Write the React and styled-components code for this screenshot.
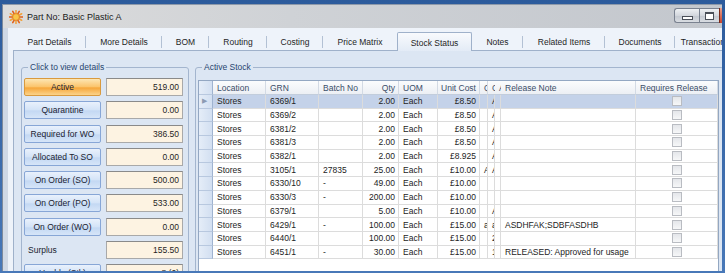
import React from "react";
import styled, { createGlobalStyle } from "styled-components";

const GlobalStyle = createGlobalStyle`
  html, body { margin: 0; padding: 0; }
  body {
    width: 725px;
    height: 273px;
    overflow: hidden;
    background: #3f6eae;
    font-family: "Liberation Sans", Arial, sans-serif;
  }
`;

// outer blue border round the screenshot
const Screen = styled.div`
  width: 725px;
  height: 273px;
  box-sizing: border-box;
  padding: 4px 3px 3px 2px;
  background: linear-gradient(#2c5b9c, #4878b8);
`;

const Window = styled.div`
  height: 100%;
  display: flex;
  flex-direction: column;
  background: #cfd8e5;
  border-top: 1px solid #8d99aa;
  border-left: 1px solid #7d8a9c;
  overflow: hidden;
`;

const TitleBar = styled.div`
  height: 23px;
  flex: none;
  display: flex;
  align-items: center;
  padding-left: 6px;
  background: linear-gradient(to right, #dcdcdc 0%, #cfd2d6 40%, #c3c7cd 100%);
`;

const TitleText = styled.span`
  margin-left: 4px;
  font-size: 9px;
  color: #1b1b1b;
  flex: 1;
`;

const Controls = styled.div`
  align-self: flex-start;
  margin-top: 3px;
  display: flex;
  height: 15px;
`;

const CtrlButton = styled.div`
  width: ${(p) => p.$w}px;
  height: 100%;
  box-sizing: border-box;
  display: flex;
  align-items: center;
  justify-content: center;
  border: 1px solid #7a8290;
  border-right: none;
  background: linear-gradient(#eef0f3, #d3d7dd 50%, #c2c7cf 51%, #d9dde2);
  &:first-child { border-radius: 3px 0 0 3px; }
`;

const CloseStub = styled.div`
  width: 2px;
  height: 100%;
  background: linear-gradient(#e8a08c, #c8412a);
  border-left: 1px solid #7a2a1a;
`;

const MinGlyph = styled.div`
  width: 9px;
  height: 2px;
  margin-top: 5px;
  background: #fff;
  border: 1px solid #4a4f58;
`;

const RestoreGlyph = styled.div`
  width: 7px;
  height: 5px;
  background: #fff;
  border: 1px solid #4a4f58;
  border-top-width: 2px;
`;

const Client = styled.div`
  flex: 1;
  margin-left: 5px;
  display: flex;
  flex-direction: column;
  background: #eef3fa;
  min-height: 0;
`;

const TabStrip = styled.div`
  height: 22px;
  flex: none;
  display: flex;
  align-items: flex-end;
  padding-left: 5px;
  position: relative;
  z-index: 1;
`;

const Tab = styled.div`
  width: ${(p) => p.$w}px;
  flex: none;
  box-sizing: border-box;
  height: ${(p) => (p.$active ? 19 : 17)}px;
  display: flex;
  align-items: center;
  justify-content: center;
  font-size: 8.5px;
  color: #1f1f1f;
  white-space: nowrap;
  overflow: hidden;
  position: relative;
  margin-bottom: ${(p) => (p.$active ? -1 : 0)}px;
  padding-top: ${(p) => (p.$active ? 1 : 0)}px;
  background: ${(p) => (p.$active ? "linear-gradient(#f8fafd, #e3ebf6)" : "transparent")};
  border: ${(p) => (p.$active ? "1px solid #9fb1ca" : "none")};
  border-bottom: none;
  border-radius: 2px 2px 0 0;
  &::after {
    content: "";
    display: ${(p) => (p.$sep ? "block" : "none")};
    position: absolute;
    right: 0;
    top: 3px;
    bottom: 2px;
    width: 1px;
    background: #b3c1d4;
  }
`;

const Page = styled.div`
  flex: 1;
  min-height: 0;
  margin-left: 5px;
  display: flex;
  gap: 6px;
  align-items: flex-start;
  padding: 11px 0 0 7px;
  background: #dce6f3;
  border-top: 1px solid #9fb1ca;
  border-left: 1px solid #9fb1ca;
  overflow: hidden;
`;

const Group = styled.fieldset`
  margin: 0;
  flex: none;
  width: ${(p) => p.$w}px;
  height: 260px;
  box-sizing: border-box;
  border: 1px solid #a3b5ce;
  border-radius: 3px;
  padding: ${(p) => p.$pt}px 4px 0 2px;
`;

const Legend = styled.legend`
  font-size: 8.5px;
  color: #27456f;
  padding: 0 2px;
  margin-left: 4px;
  line-height: 10px;
`;

const StatusList = styled.div`
  display: grid;
  grid-template-columns: 77px 77px;
  column-gap: 5px;
  row-gap: 5.3px;
  grid-auto-rows: 18px;
`;

const StatusButton = styled.div`
  box-sizing: border-box;
  display: flex;
  align-items: center;
  justify-content: center;
  font-size: 8.5px;
  color: #1a2230;
  border-radius: 2px;
  white-space: nowrap;
  border: 1px solid ${(p) => (p.$active ? "#d99a3e" : "#87a6d6")};
  background: ${(p) =>
    p.$active
      ? "linear-gradient(#fde6b3, #fbc36a 50%, #f6a63a 55%, #fbd38a)"
      : "linear-gradient(#e9f1fc, #d3e3f7 50%, #c3d8f3 55%, #d6e5f8)"};
`;

const StatusLabel = styled.div`
  display: flex;
  align-items: center;
  padding-left: 4px;
  font-size: 8.5px;
  color: #1a2230;
`;

const ValueBox = styled.div`
  box-sizing: border-box;
  display: flex;
  align-items: center;
  justify-content: flex-end;
  padding-right: 3px;
  font-size: 8.5px;
  color: #1f1f1f;
  background: #fdf3e2;
  border: 1px solid #a9a9a9;
  border-top-color: #8a8a8a;
`;

const COLS = "14px 53px 53px 44px 36px 39px 42px 8px 7px 6px 135px 82px";

const Grid = styled.div`
  width: 521px;
  height: 200px;
  box-sizing: border-box;
  border: 1px solid #93a7c2;
  background: #fff;
`;

const Row = styled.div`
  display: grid;
  grid-template-columns: ${COLS};
  height: ${(p) => (p.$head ? 14 : 13.7)}px;
`;

const HeadCell = styled.div`
  box-sizing: border-box;
  display: flex;
  align-items: center;
  justify-content: ${(p) => (p.$right ? "flex-end" : "flex-start")};
  padding: 0 3px 0 4px;
  font-size: 8.5px;
  color: #3a4d68;
  white-space: nowrap;
  overflow: hidden;
  background: linear-gradient(#fbfcfd, #eceff4);
  border-right: 1px solid #d3dae4;
  border-bottom: 1px solid #c2cddc;
`;

const RowHead = styled.div`
  box-sizing: border-box;
  display: flex;
  align-items: center;
  padding-left: 3px;
  font-size: 7px;
  color: #8c9bb3;
  background: linear-gradient(to right, #e5edf8, #d2dff1);
  border-right: 1px solid #9fb3d0;
  border-bottom: 1px solid #b8c8df;
`;

const Cell = styled.div`
  box-sizing: border-box;
  display: flex;
  align-items: center;
  justify-content: ${(p) => (p.$right ? "flex-end" : p.$center ? "center" : "flex-start")};
  padding: ${(p) => (p.$narrow ? "0 0 0 4px" : "0 3px 0 4px")};
  font-size: 8.5px;
  color: #232323;
  white-space: nowrap;
  overflow: hidden;
  background: ${(p) => (p.$sel ? "#c4d2e9" : "#fff")};
  border-right: 1px solid #dcdcdc;
  border-bottom: 1px solid #dcdcdc;
`;

const Check = styled.div`
  width: 8px;
  height: 8px;
  border: 1px solid #b9bcc2;
  background: linear-gradient(#e4e6ea, #f6f7f8);
`;

const SunIcon = () => (
  <svg width="14" height="14" viewBox="0 0 14 14">
    {Array.from({ length: 12 }).map((_, i) => {
      const a = (i * Math.PI) / 6;
      return (
        <line
          key={i}
          x1={7 + Math.cos(a) * 3}
          y1={7 + Math.sin(a) * 3}
          x2={7 + Math.cos(a) * 6.5}
          y2={7 + Math.sin(a) * 6.5}
          stroke={i % 2 ? "#f2a23a" : "#e0601c"}
          strokeWidth="1.6"
          strokeLinecap="round"
        />
      );
    })}
    <circle cx="7" cy="7" r="3.4" fill="#f7c548" stroke="#e07a1e" strokeWidth="0.8" />
  </svg>
);

const tabs = [
  ["Part Details", 73],
  ["More Details", 76],
  ["BOM", 47],
  ["Routing", 58],
  ["Costing", 56],
  ["Price Matrix", 74],
  ["Stock Status", 75, true],
  ["Notes", 51],
  ["Related Items", 82],
  ["Documents", 70],
  ["Transactions", 60],
];

const statuses = [
  ["Active", "519.00", "active"],
  ["Quarantine", "0.00"],
  ["Required for WO", "386.50"],
  ["Allocated To SO", "0.00"],
  ["On Order (SO)", "500.00"],
  ["On Order (PO)", "533.00"],
  ["On Order (WO)", "0.00"],
  ["Surplus", "155.50", "label"],
  ["Usable (Stk)", "8 (0)"],
];

const headers = [
  ["Location"],
  ["GRN"],
  ["Batch No"],
  ["Qty", true],
  ["UOM"],
  ["Unit Cost", true],
  ["Qtn"],
  ["Cert"],
  ["Approval"],
  ["Release Note"],
  ["Requires Release"],
];

const rows = [
  ["6369/1", "", "2.00", "£8.50", "", "A", ""],
  ["6369/2", "", "2.00", "£8.50", "", "A", ""],
  ["6381/2", "", "2.00", "£8.50", "", "A", ""],
  ["6381/3", "", "2.00", "£8.50", "", "A", ""],
  ["6382/1", "", "2.00", "£8.925", "", "A", ""],
  ["3105/1", "27835", "25.00", "£10.00", "A", "A", ""],
  ["6330/10", "-", "49.00", "£10.00", "", "", ""],
  ["6330/3", "-", "200.00", "£10.00", "", "", ""],
  ["6379/1", "", "5.00", "£10.00", "", "A", ""],
  ["6429/1", "-", "100.00", "£15.00", "a", "a", "ASDHFAK;SDBFASDHB"],
  ["6440/1", "", "100.00", "£15.00", "", "2", ""],
  ["6451/1", "-", "30.00", "£15.00", "", "1", "RELEASED: Approved for usage"],
];

function App() {
  return (
    <Screen>
      <GlobalStyle />
      <Window>
        <TitleBar>
          <SunIcon />
          <TitleText>Part No: Basic Plastic A</TitleText>
          <Controls>
            <CtrlButton $w={25}>
              <MinGlyph />
            </CtrlButton>
            <CtrlButton $w={20}>
              <RestoreGlyph />
            </CtrlButton>
            <CloseStub />
          </Controls>
        </TitleBar>
        <Client>
          <TabStrip>
            {tabs.map(([label, w, active], i) => {
              const next = tabs[i + 1];
              const sep = !active && !(next && next[2]) && i < tabs.length - 1;
              return (
                <Tab key={label} $w={w} $active={active} $sep={sep}>
                  {label}
                </Tab>
              );
            })}
          </TabStrip>
          <Page>
            <Group $w={168} $pt={6}>
              <Legend>Click to view details</Legend>
              <StatusList>
                {statuses.map(([label, value, kind]) => (
                  <React.Fragment key={label}>
                    {kind === "label" ? (
                      <StatusLabel>{label}</StatusLabel>
                    ) : (
                      <StatusButton $active={kind === "active"}>{label}</StatusButton>
                    )}
                    <ValueBox>{value}</ValueBox>
                  </React.Fragment>
                ))}
              </StatusList>
            </Group>
            <Group $w={527} $pt={8}>
              <Legend>Active Stock</Legend>
              <Grid>
                <Row $head>
                  <RowHead />
                  {headers.map(([h, right]) => (
                    <HeadCell key={h} $right={right}>
                      {h}
                    </HeadCell>
                  ))}
                </Row>
                {rows.map(([grn, batch, qty, cost, a, b, note], i) => {
                  const sel = i === 0;
                  return (
                    <Row key={grn}>
                      <RowHead>{sel ? "▶" : ""}</RowHead>
                      <Cell $sel={sel}>Stores</Cell>
                      <Cell $sel={sel}>{grn}</Cell>
                      <Cell $sel={sel}>{batch}</Cell>
                      <Cell $sel={sel} $right>
                        {qty}
                      </Cell>
                      <Cell $sel={sel}>Each</Cell>
                      <Cell $sel={sel} $right>
                        {cost}
                      </Cell>
                      <Cell $sel={sel} $narrow>
                        {a}
                      </Cell>
                      <Cell $sel={sel} $narrow>
                        {b}
                      </Cell>
                      <Cell $sel={sel} $narrow />
                      <Cell $sel={sel}>{note}</Cell>
                      <Cell $sel={sel} $center>
                        <Check />
                      </Cell>
                    </Row>
                  );
                })}
              </Grid>
            </Group>
          </Page>
        </Client>
      </Window>
    </Screen>
  );
}

export default App;
